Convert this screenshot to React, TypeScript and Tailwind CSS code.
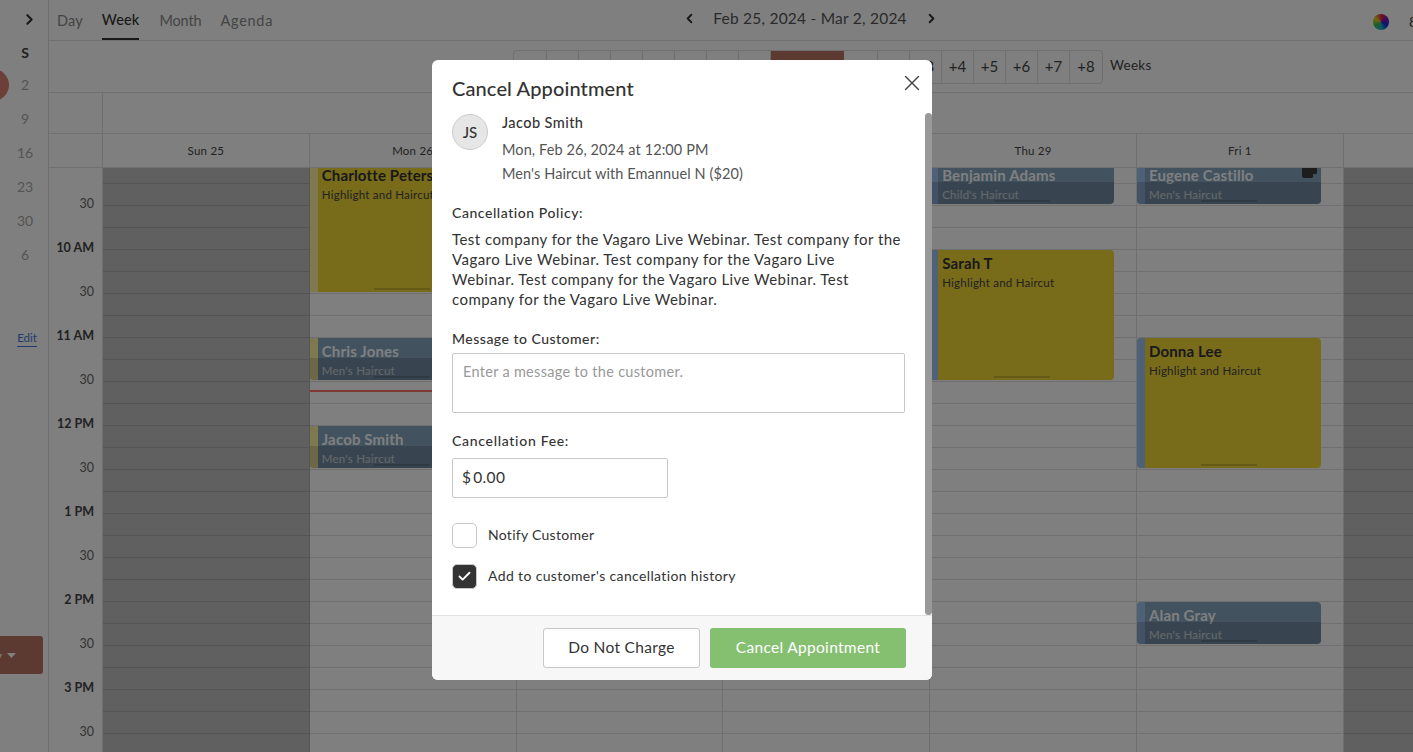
import { X, ChevronLeft, ChevronRight, Check } from "lucide-react";

const days = ["Sun 25", "Mon 26", "Tue 27", "Wed 28", "Thu 29", "Fri 1", "Sat 2"];
const minusWeeks = ["-8", "-7", "-6", "-5", "-4", "-3", "-2", "-1"];
const plusWeeks = ["+1", "+2", "+3", "+4", "+5", "+6", "+7", "+8"];
const monthDays = ["2", "9", "16", "23", "30", "6"];
const slots = Array.from({ length: 26 }, (_, i) => i);
const times = [
  "30", "10 AM", "30", "11 AM", "30", "12 PM", "30", "1 PM", "30", "2 PM", "30", "3 PM", "30",
];

type Appt = {
  day: number;
  top: number;
  tall?: boolean;
  name: string;
  service: string;
  color: "yellow" | "blue";
  bar: string;
  note?: boolean;
};

const appts: Appt[] = [
  { day: 1, top: -6, tall: true, name: "Charlotte Peterson", service: "Highlight and Haircut", color: "yellow", bar: "bg-[#fff3a0]" },
  { day: 1, top: 170, name: "Chris Jones", service: "Men's Haircut", color: "blue", bar: "bg-[#fff3a0]" },
  { day: 1, top: 258, name: "Jacob Smith", service: "Men's Haircut", color: "blue", bar: "bg-[#fff3a0]" },
  { day: 4, top: -6, name: "Benjamin Adams", service: "Child's Haircut", color: "blue", bar: "bg-[#9ec0f2]" },
  { day: 4, top: 82, tall: true, name: "Sarah T", service: "Highlight and Haircut", color: "yellow", bar: "bg-[#9ec0f2]" },
  { day: 5, top: -6, name: "Eugene Castillo", service: "Men's Haircut", color: "blue", bar: "bg-[#9ec0f2]", note: true },
  { day: 5, top: 170, tall: true, name: "Donna Lee", service: "Highlight and Haircut", color: "yellow", bar: "bg-[#9ec0f2]" },
  { day: 5, top: 434, name: "Alan Gray", service: "Men's Haircut", color: "blue", bar: "bg-[#9ec0f2]" },
];

function ApptCard({ appt }: { appt: Appt }) {
  const isBlue = appt.color === "blue";
  return (
    <div
      className={`absolute left-0 w-[184px] rounded-[4px] overflow-hidden flex ${isBlue ? "bg-[#84a4be]" : "bg-[#f0d634]"} ${appt.tall ? "h-[130px]" : "h-[42px]"}`}
      style={{ top: appt.top }}
    >
      <div className={`w-[8px] shrink-0 ${appt.bar}`} />
      <div className="pl-[4px] pt-[4px] min-w-0 whitespace-nowrap">
        <div className={`text-[15px] leading-[18px] font-bold tracking-[0.01em] ${isBlue ? "text-white" : "text-[#333]"}`}>{appt.name}</div>
        <div className={`text-[11.5px] leading-[14px] mt-[4px] tracking-[0.02em] ${isBlue ? "text-white/90" : "text-[#444]"}`}>{appt.service}</div>
      </div>
      {isBlue && <div className="absolute left-0 right-0 bottom-0 h-[22px] bg-black/15" />}
      <div className={`absolute bottom-[2px] left-[64px] w-[56px] h-[2px] ${isBlue ? "bg-[#5d7488]" : "bg-[#c9b32a]"}`} />
      {appt.note && (
        <svg className="absolute right-[4px] top-[4px]" width="15" height="12" viewBox="0 0 15 12">
          <path d="M0 0H15V7L10 12H2a2 2 0 0 1-2-2Z" fill="#3a3a3a" />
          <path d="M11 12V8H15Z" fill="#8a9aa8" />
        </svg>
      )}
    </div>
  );
}

function WeekCell({ label, wide, first }: { label: string; wide?: boolean; first?: boolean }) {
  return (
    <div className={`${wide ? "w-[34px]" : first ? "w-[33px]" : "w-[32px]"} pb-[2px] flex items-center justify-center border-r border-[#ddd] last:border-r-0`}>
      {label}
    </div>
  );
}

export default function App() {
  return (
    <div className="relative h-[752px] w-full overflow-hidden bg-white font-['Lato',sans-serif] text-[#333]">
      <div className="flex h-full">
        {/* left mini calendar */}
        <aside className="w-[49px] shrink-0 border-r border-[#dedede] relative overflow-hidden flex flex-col">
          <div className="h-[41px] flex items-center justify-end pr-[10px] pb-[3px]">
            <ChevronRight size={17} strokeWidth={3} className="text-[#333]" />
          </div>
          <div className="pl-[2px] text-center text-[14px] font-bold text-[#444] leading-[16px] mt-[4px]">S</div>
          <div className="mt-[6px] flex flex-col">
            {monthDays.map((d) => (
              <div key={d} className="h-[34px] flex items-center justify-center pl-[2px] text-[14px] text-[#aaa]">{d}</div>
            ))}
          </div>
          <div className="absolute left-[-23px] top-[69px] w-[32px] h-[32px] rounded-full bg-[#d88070]" />
          <div className="mt-[58px] flex justify-center pl-[6px]">
            <span className="text-[11.5px] leading-[17px] text-[#3f78e0] border-b border-[#3f78e0]">Edit</span>
          </div>
          <div className="mt-auto mb-[78px] mr-[5px] -ml-[60px] h-[38px] shrink-0 rounded-[3px] bg-[#b87464] flex items-center justify-end pr-[27px] gap-[5px] text-white text-[14px] whitespace-nowrap">
            <span>Today</span>
            <svg width="9" height="5" viewBox="0 0 9 5"><path d="M0 0H9L4.5 5Z" fill="#fff" /></svg>
          </div>
        </aside>

        <main className="flex-1 min-w-0 flex flex-col">
          {/* view tabs + date range */}
          <header className="h-[41px] shrink-0 border-b border-[#dedede] relative flex items-center pl-[8px] text-[14.5px]">
            <nav className="flex h-full gap-[19px] text-[#888] tracking-[0.01em]">
              <span className="leading-[41px]">Day</span>
              <span className="leading-[40px] h-[40px] border-b-2 border-[#333] text-[#333] font-medium">Week</span>
              <span className="leading-[41px] ml-[1px] tracking-[-0.01em]">Month</span>
              <span className="leading-[41px] tracking-[0.05em]">Agenda</span>
            </nav>
            <div className="absolute left-[633px] top-[7px] flex items-center text-[#555]">
              <ChevronLeft size={15} strokeWidth={3} className="text-[#333]" />
              <span className="ml-[16px] mr-[17px] w-[194px] text-center text-[15.5px] tracking-[0.015em] whitespace-nowrap">Feb 25, 2024 - Mar 2, 2024</span>
              <ChevronRight size={15} strokeWidth={3} className="text-[#333]" />
            </div>
            <div className="absolute left-[1324px] top-[14px] w-[16px] h-[16px] rounded-full bg-[conic-gradient(#e03030,#8010c0,#1030d0,#20b0d0,#40c040,#e0d020,#e03030)]" />
            <span className="absolute left-[1360px] top-[11px] text-[#444] text-[14px]">8</span>
          </header>

          {/* week jump strip */}
          <div className="h-[52px] shrink-0 border-b border-[#dedede] flex items-start pt-[9px] pl-[464px] text-[15px] text-[#444]">
            <div className="flex h-[34px] border border-[#dedede] rounded-[4px] overflow-hidden">
              {minusWeeks.map((w, i) => <WeekCell key={w} label={w} first={i === 0} />)}
              <div className="w-[73px] bg-[#b87464]" />
              {plusWeeks.map((w, i) => <WeekCell key={w} label={w} wide={i === 0} />)}
            </div>
            <span className="ml-[7px] text-[13.5px] leading-[30px] tracking-[0.02em] text-[#444]">Weeks</span>
          </div>

          {/* all-day row */}
          <div className="h-[41px] shrink-0 border-b border-[#dedede] flex">
            <div className="w-[54px] shrink-0 border-r border-[#dedede]" />
          </div>

          {/* day headers */}
          <div className="h-[34px] shrink-0 border-b border-[#dedede] flex">
            <div className="w-[54px] shrink-0 border-r border-[#dedede]" />
            <div className="grid grid-cols-[repeat(7,206.8px)]">
              {days.map((d) => (
                <div key={d} className="border-r border-[#dedede] flex items-center justify-center text-[11.5px] tracking-[0.02em] text-[#444]">{d}</div>
              ))}
            </div>
          </div>

          {/* time grid */}
          <div className="flex-1 min-h-0 flex overflow-hidden">
            <div className="w-[54px] shrink-0 border-r border-[#dedede] pt-[14px]">
              {times.map((t, i) => (
                <div key={i} className={`h-[44px] flex items-center justify-end pr-[8px] ${t === "30" ? "text-[12.5px] text-[#666]" : "text-[12.5px] font-bold text-[#444]"}`}>{t}</div>
              ))}
            </div>
            <div className="grid grid-cols-[repeat(7,206.8px)]">
              {days.map((d, i) => {
                const closed = i === 0 || i === 6;
                return (
                  <div key={d} className={`relative overflow-hidden border-r ${closed ? "bg-[#c0c0c0] border-[#aaa]" : "border-[#dedede]"}`}>
                    <div className={`h-[16px] border-b ${closed ? "border-[#aaa]" : "border-[#dedede]"}`} />
                    {slots.map((s) => (
                      <div key={s} className={`h-[22px] border-b ${closed ? "border-[#aaa]" : "border-[#dedede]"}`} />
                    ))}
                    {i === 1 && <div className="absolute left-0 right-0 top-[222px] h-[2px] bg-[#ff7068]" />}
                    {appts.filter((a) => a.day === i).map((a) => <ApptCard key={a.name} appt={a} />)}
                  </div>
                );
              })}
            </div>
          </div>
        </main>
      </div>

      {/* dimmed backdrop and dialog */}
      <div className="absolute inset-0 bg-black/50 pl-[432px] pt-[60px]">
        <div className="relative w-[500px] h-[620px] bg-white rounded-[6px] overflow-hidden flex flex-col text-[#333]">
          <button className="absolute right-[7px] top-[10px] text-[#444]"><X size={26} strokeWidth={1.3} /></button>
          <div className="absolute right-0 top-[53px] w-[7px] h-[502px] rounded-[4px] bg-[#999]" />

          <div className="flex-1 min-h-0 px-[20px] pt-[15px]">
            <h2 className="text-[20px] leading-[26px] font-medium tracking-[0.006em] text-[#333]">Cancel Appointment</h2>

            <div className="mt-[13px] flex">
              <div className="w-[36px] h-[36px] rounded-full bg-[#e6e6e6] border border-[#ccc] flex items-center justify-center text-[15px] font-medium">JS</div>
              <div className="ml-[14px] -mt-[1px]">
                <div className="text-[14.5px] leading-[20px] font-medium tracking-[0.03em]">Jacob Smith</div>
                <div className="text-[14.5px] leading-[20px] mt-[7px] tracking-[0.006em] text-[#555]">Mon, Feb 26, 2024 at 12:00 PM</div>
                <div className="text-[14.5px] leading-[20px] mt-[4px] tracking-[0.006em] text-[#555]">Men's Haircut with Emannuel N ($20)</div>
              </div>
            </div>

            <div className="mt-[19px] text-[14px] leading-[20px] font-medium tracking-[0.04em]">Cancellation Policy:</div>
            <p className="mt-[6px] w-[455px] text-[15px] leading-[20px] tracking-[0.03em]">
              Test company for the Vagaro Live Webinar. Test company for the Vagaro Live Webinar. Test company for the Vagaro Live<br />
              Webinar. Test company for the Vagaro Live Webinar. Test company for the Vagaro Live Webinar.
            </p>

            <div className="mt-[20px] text-[14px] leading-[20px] font-medium tracking-[0.035em]">Message to Customer:</div>
            <div className="mt-[4px] w-[453px] h-[60px] border border-[#c8c8c8] rounded-[2px] px-[10px] py-[8px] text-[14.5px] leading-[20px] tracking-[0.02em] text-[#999]">Enter a message to the customer.</div>

            <div className="mt-[18px] text-[14px] leading-[20px] font-medium tracking-[0.05em]">Cancellation Fee:</div>
            <div className="mt-[7px] w-[216px] h-[40px] border border-[#c8c8c8] rounded-[2px] pl-[9px] flex items-center text-[15.5px] tracking-[0.02em]">$<span className="ml-[2px]">0.00</span></div>

            <label className="mt-[25px] flex items-center gap-[11px] text-[14px] tracking-[0.02em]">
              <span className="w-[25px] h-[25px] rounded-[5px] border border-[#c8c8c8] bg-white" />
              <span className="pb-[2px]">Notify Customer</span>
            </label>
            <label className="mt-[16px] flex items-center gap-[11px] text-[14px] tracking-[0.026em]">
              <span className="w-[25px] h-[25px] rounded-[5px] border border-[#c8c8c8] bg-[#333] flex items-center justify-center">
                <Check size={15} strokeWidth={3} className="text-white" />
              </span>
              <span className="pb-[2px]">Add to customer's cancellation history</span>
            </label>
          </div>

          <footer className="h-[65px] shrink-0 bg-[#f7f7f7] border-t border-[#e2e2e2] flex items-start justify-end gap-[10px] pt-[12px] pr-[26px]">
            <button className="w-[157px] h-[40px] bg-white border border-[#c8c8c8] rounded-[3px] text-[15.5px] tracking-[0.02em] text-[#333]">Do Not Charge</button>
            <button className="w-[196px] h-[40px] bg-[#85c070] rounded-[3px] text-[15.5px] tracking-[0.02em] text-white">Cancel Appointment</button>
          </footer>
        </div>
      </div>
    </div>
  );
}
